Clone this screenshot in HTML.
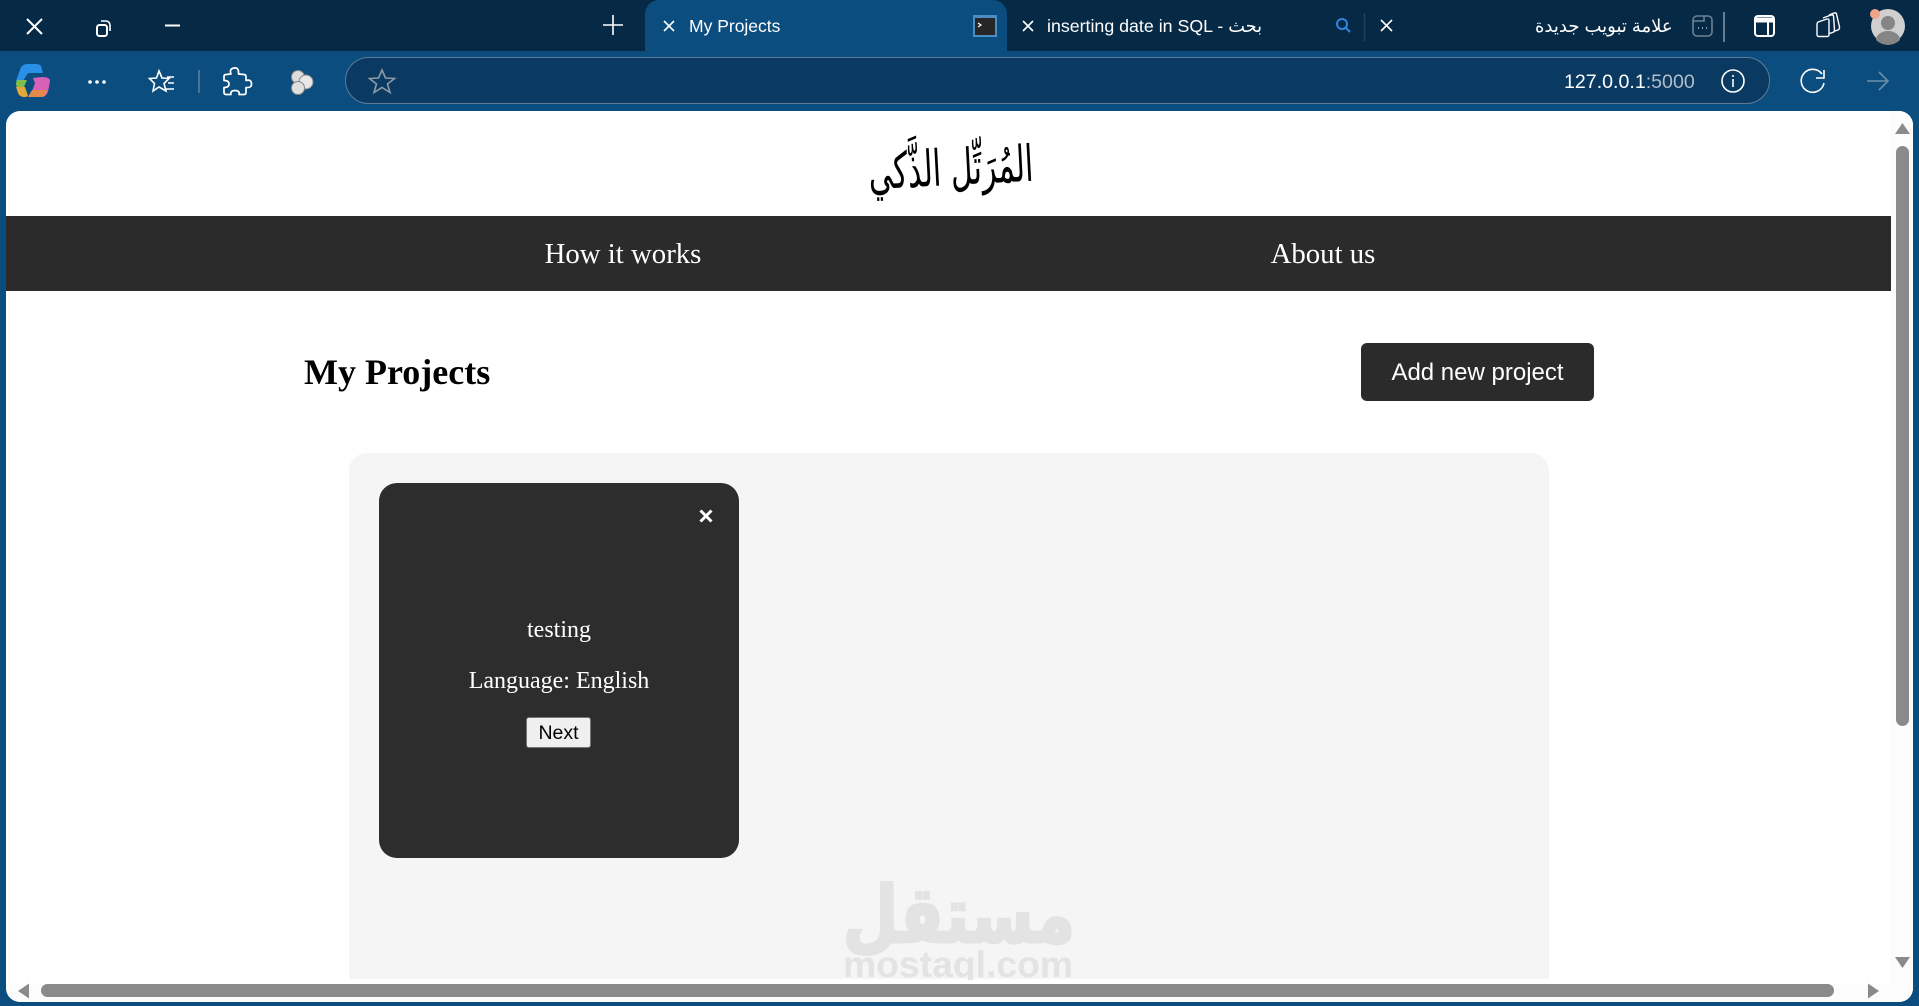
<!DOCTYPE html>
<html lang="en"><head><meta charset="utf-8"><title>My Projects</title>
<style>
html,body{margin:0;padding:0;width:1919px;height:1006px;overflow:hidden;background:#0b4d7e}
div,span,button{position:absolute;box-sizing:border-box}
.t{white-space:nowrap;line-height:1}
.serif{font-family:"Liberation Serif","DejaVu Serif",serif}
.sans{font-family:"Liberation Sans","DejaVu Sans",sans-serif}
</style></head><body>
<div style="left:0;top:0;width:1919px;height:51px;background:#062945"></div>
<div style="left:645px;top:0;width:362px;height:51px;background:#0b4d7e;border-radius:14px 14px 0 0"></div>
<div style="left:345px;top:57px;width:1425px;height:47px;background:#0a3a61;border:1.5px solid #5a7d9c;border-radius:24px"></div>

<div class="t sans" style="left:689px;top:18px;font-size:17.5px;color:#fff">My Projects</div>
<div class="t sans" style="left:1047px;top:18px;font-size:17.8px;color:#fff;direction:ltr">inserting date in SQL - بحث</div>
<div class="t sans" style="left:1535px;top:17px;font-size:18px;color:#fff;width:144px;text-align:right" dir="rtl"><span style="position:static;display:block;text-align:left">علامة تبويب جديدة</span></div>
<div class="t sans" style="left:1564px;top:72.500px;font-size:19.6px;color:#fff">127.0.0.1<span style="position:static;color:#b2bdc7">:5000</span></div>

<svg style="position:absolute;left:0;top:0" width="1919" height="111" viewBox="0 0 1919 111" fill="none" stroke="#fff" stroke-width="1.6">
<path d="M27 19l15 15M42 19l-15 15" stroke-width="2"/>
<rect x="97" y="25" width="10" height="11" rx="2.5" stroke-width="2"/><path d="M101 21h5a4 4 0 0 1 4 4v6" stroke-width="1.6"/>
<path d="M165 25.5h15" stroke-width="2"/>
<path d="M603 25h20M613 15v20" stroke-width="1.6"/>
<path d="M664 21l10 10M674 21l-10 10M1023 21l10 10M1033 21l-10 10M1381 20l11 11M1392 20l-11 11"/>
<rect x="973" y="15" width="24" height="22" fill="#4a8cc4" stroke="none"/><rect x="975" y="18" width="20" height="17" fill="#262626" stroke="none"/><path d="M978 23l3 2-3 2" stroke-width="1.2"/>
<circle cx="1342" cy="24" r="5" stroke="#2f86de" stroke-width="2"/><path d="M1346 28l4 4" stroke="#2f86de" stroke-width="2"/>
<path d="M1364.500 13v28" stroke="#1d4060"/>
<rect x="1693" y="16" width="19" height="20" rx="4" stroke="#6b8296"/><path d="M1693 21h11v-5" stroke="#6b8296"/><path d="M1698 28h1M1702 28h1M1706 28h1" stroke="#8aa0b2" stroke-width="2"/>
<path d="M1724 12v30" stroke="#7f94a8"/>
<rect x="1755" y="16" width="19" height="20" rx="3" stroke-width="2"/><path d="M1755 20h19" stroke-width="5"/><path d="M1768 20v15" stroke-width="2"/>
<path d="M1817 24q0-1 1-2l9-3q2-.5 2 1.500v14q0 2-2 2h-8q-2 0-2-2zM1823 18l8-3q2-.5 2.500 1l1 14q0 2-2 2.500l-3 1M1829 15l5-2q2-.5 2.500 1l3 13q.3 2-1.500 3l-3 1" stroke-width="1.4" stroke-linejoin="round"/>
<circle cx="1888" cy="26" r="17" fill="#cfcfcf" stroke="none"/><circle cx="1888" cy="23" r="7" fill="#858585" stroke="none"/><path d="M1876 40a12 9 0 0 1 24 0a17 17 0 0 1-24 0" fill="#858585" stroke="none"/><circle cx="1875" cy="14" r="5" fill="#f0a58a" stroke="none"/>

<g transform="translate(0 9)">
<path d="M21 58q3-3 6-3h8q5 0 6 2l2 7h-13q-3 0-4 3l-3 5h-7z" fill="#2a8fe6" stroke="none"/>
<path d="M17 71h10l-3 7h-7q-2-3 0-7z" fill="#7ebf4d" stroke="none"/>
<path d="M16 78h9l3 9-2 1h-3q-4-1-5-4z" fill="#e3a83c" stroke="none"/>
<path d="M33 69l9-1q8 0 8 4l-2 11q-2 5-7 5h-11l5-14z" fill="#d860b8" stroke="none"/>
<path d="M32 81l15 0q-1 7-6 7h-13z" fill="#e58a4c" stroke="none"/>
</g>
<circle cx="90" cy="82" r="1.8" fill="#fff" stroke="none"/><circle cx="97" cy="82" r="1.8" fill="#fff" stroke="none"/><circle cx="104" cy="82" r="1.8" fill="#fff" stroke="none"/>
<path d="M159 71l3 7 7 .5-5 5 2 7.500-7-4-6 4 1.500-7.500-5-5 7-.5zM167 77h7M168 83h6M166 89h8"/>
<path d="M199 70v23" stroke="#5a7d9c"/>
<path d="M231 74q-2-5 3-6t4.500 6l5.500.5q2 0 2 2v4q5-1.500 5.500 3t-5.500 4v5q0 2-2 2h-5q1-4-4-4t-4 4h-5q-2 0-2-2v-5q5 0 5-3.500t-5-3.500v-4q0-2 2-2z" stroke-width="1.7" stroke-linejoin="round"/>
<circle cx="298" cy="77" r="6.500" fill="#ddd" stroke="#888" stroke-width="1"/><circle cx="306" cy="82" r="7" fill="#e8e8e8" stroke="#888" stroke-width="1"/><circle cx="298" cy="88" r="6.500" fill="#e0e0e0" stroke="#888" stroke-width="1"/>
<path d="M382 70l3.500 8 9 .5-7 5.500 2.500 8.500-8-5-8 5 2.500-8.500-7-5.500 9-.5z" stroke="#8d9aa6"/>
<circle cx="1733" cy="81" r="11"/><path d="M1733 79v8M1733 75v2"/>
<path d="M1822 74a11.500 11.500 0 1 0 2 9M1824 70v8h-8"/>
<path d="M1867 81h21M1879 72l9 9-9 9" stroke="#6f8ea9"/>
</svg>

<!-- page -->
<div style="left:6px;top:111px;width:1907px;height:891px;background:#fff;border-radius:14px;overflow:hidden">
  <div style="left:0;top:105px;width:1885px;height:75px;background:#2b2b2b"></div>
  <div style="left:1885px;top:0;width:22px;height:891px;background:#fcfcfc"></div>
  <div style="left:0;top:873px;width:1907px;height:18px;background:#fcfcfc"></div>
  <div style="left:343px;top:342px;width:1200px;height:526px;background:#f5f5f5;border-radius:18px 18px 0 0"></div>
</div>

<svg style="position:absolute;left:820px;top:110px" width="240" height="110" viewBox="0 0 240 110">
<text x="131" y="75" text-anchor="middle" textLength="165" lengthAdjust="spacingAndGlyphs" direction="rtl" transform="rotate(-3 131 64)" font-family="'DejaVu Sans','Liberation Serif',serif" font-size="50" fill="#000">المُرَتِّل الذَّكي</text>
</svg>

<div class="t serif" style="left:445px;top:240px;width:356px;text-align:center;font-size:28.8px;color:#fff">How it works</div>
<div class="t serif" style="left:1145px;top:240px;width:356px;text-align:center;font-size:28.8px;color:#fff">About us</div>
<div class="t serif" style="left:304px;top:354px;font-size:36px;font-weight:700;color:#000">My Projects</div>
<div class="t sans" style="left:1361px;top:343px;width:233px;height:58px;background:#2b2b2b;border-radius:6px;color:#fff;font-size:24px;line-height:60px;text-align:center">Add new project</div>

<div style="left:379px;top:483px;width:360px;height:375px;background:#2d2d2d;border-radius:18px"></div>
<svg style="position:absolute;left:696px;top:505.500px" width="20" height="20" fill="none" stroke="#fff" stroke-width="3"><path d="M4.500 4.500l11 11M15.500 4.500l-11 11"/></svg>
<div class="t serif" style="left:379px;top:618px;width:360px;text-align:center;font-size:24px;color:#fff">testing</div>
<div class="t serif" style="left:379px;top:669px;width:360px;text-align:center;font-size:24px;color:#fff">Language: English</div>
<div class="t sans" style="left:526px;top:717px;width:65px;height:31px;background:#efefef;border:1px solid #767676;border-radius:3px;font-size:19.5px;line-height:30px;text-align:center;color:#000">Next</div>

<svg style="position:absolute;left:800px;top:860px" width="320" height="120" viewBox="0 0 320 120">
<text x="159" y="82" text-anchor="middle" textLength="232" lengthAdjust="spacingAndGlyphs" direction="rtl" font-family="'DejaVu Sans',sans-serif" font-weight="700" font-size="78" fill="#e3e3e3" stroke="#e3e3e3" stroke-width="3">مستقل</text>
<text x="158" y="117" text-anchor="middle" textLength="230" lengthAdjust="spacingAndGlyphs" font-family="'Liberation Sans',sans-serif" font-weight="700" font-size="37.300" fill="#e3e3e3">mostaql.com</text>
</svg>

<!-- scrollbars -->
<div style="left:1896px;top:146px;width:13px;height:580px;background:#8a8a8a;border-radius:7px"></div>
<div style="left:41px;top:984px;width:1793px;height:13px;background:#8a8a8a;border-radius:7px"></div>
<svg style="position:absolute;left:0;top:0;pointer-events:none" width="1919" height="1006" fill="#8a8a8a">
<path d="M1902.500 123l7.500 11h-15zM1902.500 968l-7.500-11h15zM18 991l11-7.500v15zM1879 991l-11-7.500v15z"/>
</svg>
</body></html>
